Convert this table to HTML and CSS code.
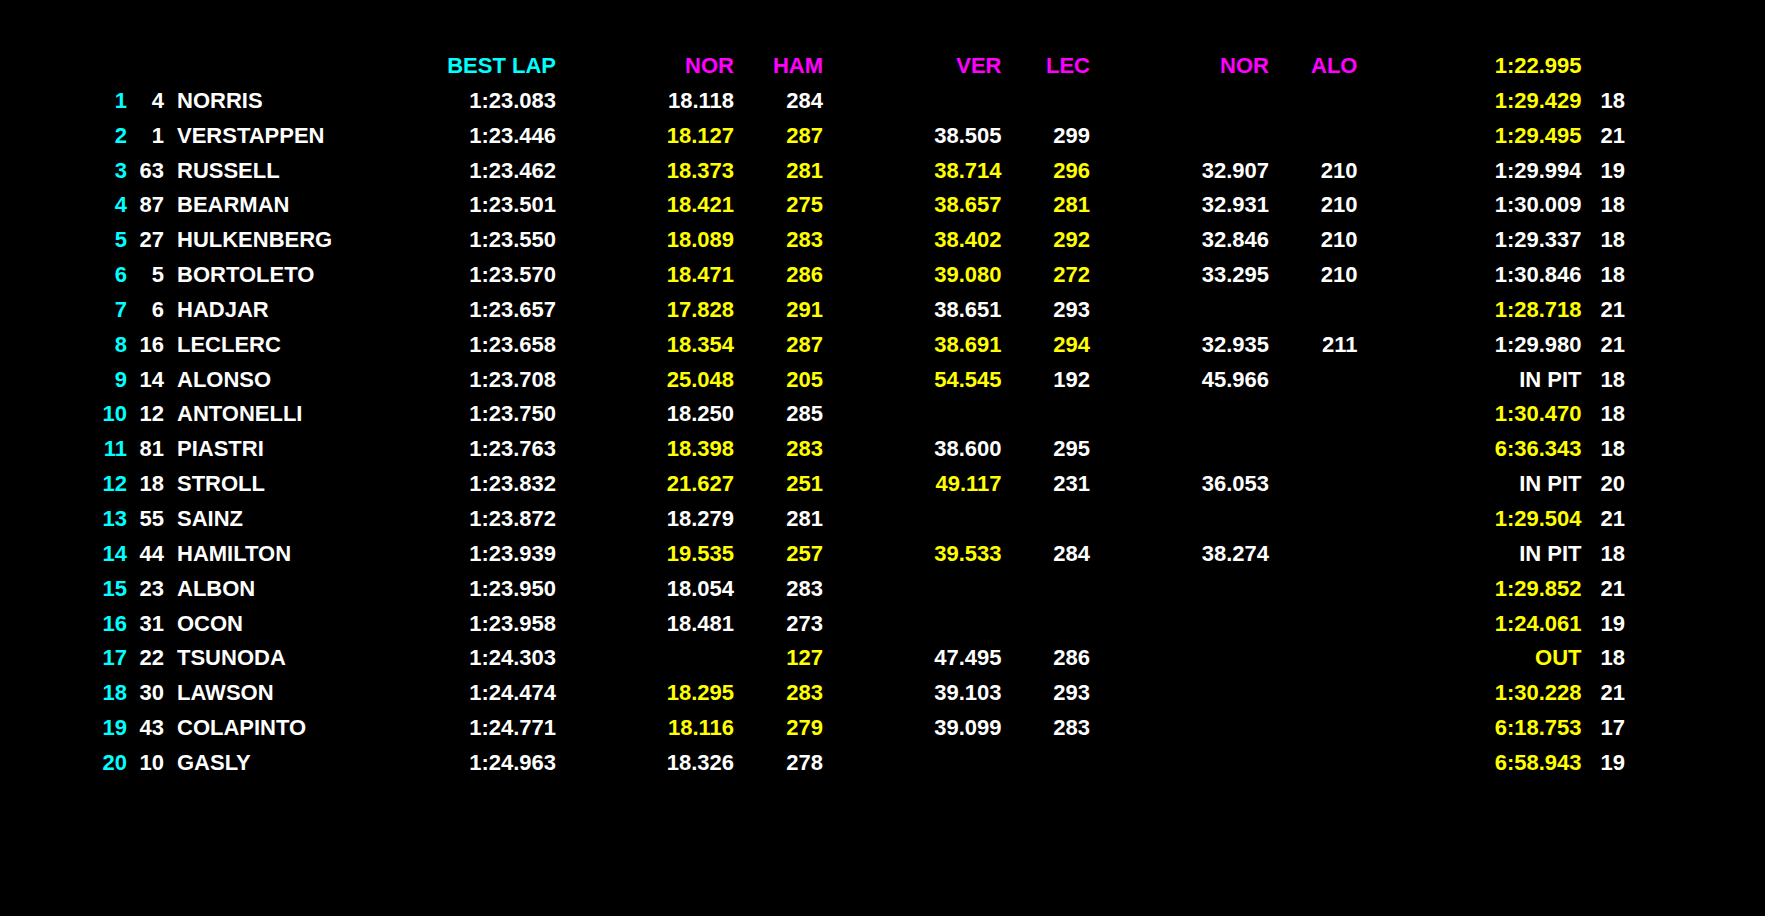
FILE: index.html
```html
<!DOCTYPE html>
<html lang="en">
<head>
<meta charset="utf-8">
<title>Timing</title>
<link rel="stylesheet" href="styles.css">
</head>
<body>
<div class="board">
  <div class="row head">
    <span></span><span></span><span></span>
    <span class="r c">BEST LAP</span>
    <span class="r m">NOR</span><span class="r m">HAM</span>
    <span class="r m">VER</span><span class="r m">LEC</span>
    <span class="r m">NOR</span><span class="r m">ALO</span>
    <span class="r y">1:22.995</span><span></span>
  </div>

  <div class="row"><span class="r c">1</span><span class="r">4</span><span class="name">NORRIS</span><span class="r">1:23.083</span><span class="r">18.118</span><span class="r">284</span><span></span><span></span><span></span><span></span><span class="r y">1:29.429</span><span class="laps">18</span></div>
  <div class="row"><span class="r c">2</span><span class="r">1</span><span class="name">VERSTAPPEN</span><span class="r">1:23.446</span><span class="r y">18.127</span><span class="r y">287</span><span class="r">38.505</span><span class="r">299</span><span></span><span></span><span class="r y">1:29.495</span><span class="laps">21</span></div>
  <div class="row"><span class="r c">3</span><span class="r">63</span><span class="name">RUSSELL</span><span class="r">1:23.462</span><span class="r y">18.373</span><span class="r y">281</span><span class="r y">38.714</span><span class="r y">296</span><span class="r">32.907</span><span class="r">210</span><span class="r">1:29.994</span><span class="laps">19</span></div>
  <div class="row"><span class="r c">4</span><span class="r">87</span><span class="name">BEARMAN</span><span class="r">1:23.501</span><span class="r y">18.421</span><span class="r y">275</span><span class="r y">38.657</span><span class="r y">281</span><span class="r">32.931</span><span class="r">210</span><span class="r">1:30.009</span><span class="laps">18</span></div>
  <div class="row"><span class="r c">5</span><span class="r">27</span><span class="name">HULKENBERG</span><span class="r">1:23.550</span><span class="r y">18.089</span><span class="r y">283</span><span class="r y">38.402</span><span class="r y">292</span><span class="r">32.846</span><span class="r">210</span><span class="r">1:29.337</span><span class="laps">18</span></div>
  <div class="row"><span class="r c">6</span><span class="r">5</span><span class="name">BORTOLETO</span><span class="r">1:23.570</span><span class="r y">18.471</span><span class="r y">286</span><span class="r y">39.080</span><span class="r y">272</span><span class="r">33.295</span><span class="r">210</span><span class="r">1:30.846</span><span class="laps">18</span></div>
  <div class="row"><span class="r c">7</span><span class="r">6</span><span class="name">HADJAR</span><span class="r">1:23.657</span><span class="r y">17.828</span><span class="r y">291</span><span class="r">38.651</span><span class="r">293</span><span></span><span></span><span class="r y">1:28.718</span><span class="laps">21</span></div>
  <div class="row"><span class="r c">8</span><span class="r">16</span><span class="name">LECLERC</span><span class="r">1:23.658</span><span class="r y">18.354</span><span class="r y">287</span><span class="r y">38.691</span><span class="r y">294</span><span class="r">32.935</span><span class="r">211</span><span class="r">1:29.980</span><span class="laps">21</span></div>
  <div class="row"><span class="r c">9</span><span class="r">14</span><span class="name">ALONSO</span><span class="r">1:23.708</span><span class="r y">25.048</span><span class="r y">205</span><span class="r y">54.545</span><span class="r">192</span><span class="r">45.966</span><span></span><span class="r">IN PIT</span><span class="laps">18</span></div>
  <div class="row"><span class="r c">10</span><span class="r">12</span><span class="name">ANTONELLI</span><span class="r">1:23.750</span><span class="r">18.250</span><span class="r">285</span><span></span><span></span><span></span><span></span><span class="r y">1:30.470</span><span class="laps">18</span></div>
  <div class="row"><span class="r c">11</span><span class="r">81</span><span class="name">PIASTRI</span><span class="r">1:23.763</span><span class="r y">18.398</span><span class="r y">283</span><span class="r">38.600</span><span class="r">295</span><span></span><span></span><span class="r y">6:36.343</span><span class="laps">18</span></div>
  <div class="row"><span class="r c">12</span><span class="r">18</span><span class="name">STROLL</span><span class="r">1:23.832</span><span class="r y">21.627</span><span class="r y">251</span><span class="r y">49.117</span><span class="r">231</span><span class="r">36.053</span><span></span><span class="r">IN PIT</span><span class="laps">20</span></div>
  <div class="row"><span class="r c">13</span><span class="r">55</span><span class="name">SAINZ</span><span class="r">1:23.872</span><span class="r">18.279</span><span class="r">281</span><span></span><span></span><span></span><span></span><span class="r y">1:29.504</span><span class="laps">21</span></div>
  <div class="row"><span class="r c">14</span><span class="r">44</span><span class="name">HAMILTON</span><span class="r">1:23.939</span><span class="r y">19.535</span><span class="r y">257</span><span class="r y">39.533</span><span class="r">284</span><span class="r">38.274</span><span></span><span class="r">IN PIT</span><span class="laps">18</span></div>
  <div class="row"><span class="r c">15</span><span class="r">23</span><span class="name">ALBON</span><span class="r">1:23.950</span><span class="r">18.054</span><span class="r">283</span><span></span><span></span><span></span><span></span><span class="r y">1:29.852</span><span class="laps">21</span></div>
  <div class="row"><span class="r c">16</span><span class="r">31</span><span class="name">OCON</span><span class="r">1:23.958</span><span class="r">18.481</span><span class="r">273</span><span></span><span></span><span></span><span></span><span class="r y">1:24.061</span><span class="laps">19</span></div>
  <div class="row"><span class="r c">17</span><span class="r">22</span><span class="name">TSUNODA</span><span class="r">1:24.303</span><span></span><span class="r y">127</span><span class="r">47.495</span><span class="r">286</span><span></span><span></span><span class="r y">OUT</span><span class="laps">18</span></div>
  <div class="row"><span class="r c">18</span><span class="r">30</span><span class="name">LAWSON</span><span class="r">1:24.474</span><span class="r y">18.295</span><span class="r y">283</span><span class="r">39.103</span><span class="r">293</span><span></span><span></span><span class="r y">1:30.228</span><span class="laps">21</span></div>
  <div class="row"><span class="r c">19</span><span class="r">43</span><span class="name">COLAPINTO</span><span class="r">1:24.771</span><span class="r y">18.116</span><span class="r y">279</span><span class="r">39.099</span><span class="r">283</span><span></span><span></span><span class="r y">6:18.753</span><span class="laps">17</span></div>
  <div class="row"><span class="r c">20</span><span class="r">10</span><span class="name">GASLY</span><span class="r">1:24.963</span><span class="r">18.326</span><span class="r">278</span><span></span><span></span><span></span><span></span><span class="r y">6:58.943</span><span class="laps">19</span></div>
</div>
</body>
</html>
```

FILE: styles.css
```css
html, body {
  margin: 0;
  padding: 0;
  background: #000;
}

body {
  width: 1765px;
  height: 916px;
  overflow: hidden;
  font-family: "Liberation Sans", Arial, sans-serif;
  font-weight: bold;
  font-size: 22px;
  color: #fff;
}

.board {
  padding-top: 49px;
}

.row {
  display: grid;
  grid-template-columns: 127px 37px 200px 192px 178px 89px 178.5px 88.5px 179px 88.5px 224px 90px;
  height: 34.85px;
  line-height: 34.85px;
  white-space: nowrap;
}

.r {
  text-align: right;
}

.name {
  padding-left: 13px;
}

.laps {
  padding-left: 19px;
}

.c { color: #00ffff; }
.m { color: #ff00ff; }
.y { color: #ffff00; }
```
